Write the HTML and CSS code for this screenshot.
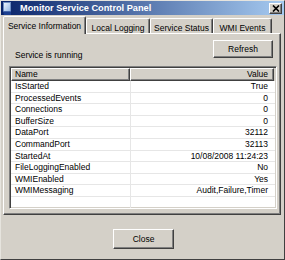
FILE: index.html
```html
<!DOCTYPE html>
<html lang="en">
<head>
  <meta charset="UTF-8">
  <title>Monitor Service Control Panel</title>
  <link rel="stylesheet" href="styles.css">
</head>
<body>
  <div class="window">
    <div class="titlebar">
      <svg class="app-icon" width="9" height="13" viewBox="0 0 9 13">
        <defs>
          <linearGradient id="scr" x1="0" y1="0" x2="1" y2="1">
            <stop offset="0" stop-color="#f4f8fd"/>
            <stop offset="1" stop-color="#8fb4e4"/>
          </linearGradient>
        </defs>
        <rect x="0.5" y="0.5" width="7" height="9" fill="url(#scr)" stroke="#6f8fc4"/>
        <path d="M0 9.5 L8 9.5 L8 13 L1 13 Z" fill="#1c3f8f"/>
      </svg>
      <span class="title">Monitor Service Control Panel</span>
      <span class="close-box">
        <svg width="8" height="7" viewBox="0 0 8 7"><path d="M1 0.5 L7 6.5 M7 0.5 L1 6.5" stroke="#000" stroke-width="1.7"/></svg>
      </span>
    </div>

    <div class="content">
      <div class="tabs">
        <div class="tab active tab-info">Service Information</div>
        <div class="tab tab-log">Local Logging</div>
        <div class="tab tab-status">Service Status</div>
        <div class="tab tab-wmi">WMI Events</div>
      </div>

      <div class="panel">
        <div class="panel-top">
          <span class="status">Service is running</span>
          <button class="btn btn-refresh">Refresh</button>
        </div>

        <div class="list">
          <div class="list-head">
            <div class="col-name">Name</div>
            <div class="col-value">Value</div>
          </div>
          <div class="row"><div class="col-name">IsStarted</div><div class="col-value">True</div></div>
          <div class="row"><div class="col-name">ProcessedEvents</div><div class="col-value">0</div></div>
          <div class="row"><div class="col-name">Connections</div><div class="col-value">0</div></div>
          <div class="row"><div class="col-name">BufferSize</div><div class="col-value">0</div></div>
          <div class="row"><div class="col-name">DataPort</div><div class="col-value">32112</div></div>
          <div class="row"><div class="col-name">CommandPort</div><div class="col-value">32113</div></div>
          <div class="row"><div class="col-name">StartedAt</div><div class="col-value">10/08/2008 11:24:23</div></div>
          <div class="row"><div class="col-name">FileLoggingEnabled</div><div class="col-value">No</div></div>
          <div class="row"><div class="col-name">WMIEnabled</div><div class="col-value">Yes</div></div>
          <div class="row"><div class="col-name">WMIMessaging</div><div class="col-value">Audit,Failure,Timer</div></div>
          <div class="row"><div class="col-name"></div><div class="col-value"></div></div>
        </div>
      </div>

      <div class="footer">
        <button class="btn btn-close">Close</button>
      </div>
    </div>
  </div>
</body>
</html>
```

FILE: styles.css
```css
* {
  box-sizing: border-box;
}
body {
  margin: 0;
  font-family: "Liberation Sans", Arial, sans-serif;
  font-size: 8.5px;
  color: #000;
  background: #d4d0c8;
}

/* window frame */
.window {
  width: 285px;
  height: 260px;
  background: #d4d0c8;
  border: 1px solid;
  border-color: #e6e4de #404040 #404040 #e6e4de;
}
.titlebar {
  display: flex;
  align-items: center;
  height: 14px;
  padding: 0 2px 0 2px;
  background: linear-gradient(to right, #0a246a, #a6caf0);
  color: #fff;
  font-weight: bold;
  font-size: 9.2px;
}
.app-icon {
  margin-right: 8px;
}
.close-box {
  display: flex;
  align-items: center;
  justify-content: center;
  margin-left: auto;
  width: 13px;
  height: 11px;
  background: #d4d0c8;
  border: 1px solid;
  border-color: #fff #404040 #404040 #fff;
  box-shadow: inset -1px -1px #808080;
}

.content {
  padding: 1px 3px 0 2px;
}

/* tabs */
.tabs {
  display: flex;
  align-items: flex-end;
  height: 17px;
}
.tab {
  height: 15px;
  padding-top: 4px;
  line-height: 10px;
  text-align: center;
  white-space: nowrap;
  border: 1px solid;
  border-bottom: none;
  border-color: #fff #404040 transparent #fff;
  border-radius: 2px 2px 0 0;
  box-shadow: inset -1px 0 #808080;
}
.tab.active {
  height: 18px;
  margin-bottom: -1px;
  background: #d4d0c8;
}
.tab-info { width: 83px; }
.tab-log { width: 64px; }
.tab-status { width: 63px; }
.tab-wmi { width: 59px; }

/* tab page */
.panel {
  display: flex;
  flex-direction: column;
  height: 182px;
  padding: 6px 3px 5px 5px;
  border: 1px solid;
  border-color: #fff #404040 #404040 #fff;
  box-shadow: inset -1px -1px #808080;
}
.panel-top {
  display: flex;
  justify-content: space-between;
  align-items: flex-start;
  height: 18px;
  margin-bottom: 8px;
}
.status {
  margin: 10px 0 0 6px;
  line-height: 10px;
}

.btn {
  padding: 0;
  font-family: inherit;
  font-size: 8.5px;
  color: #000;
  background: #d4d0c8;
  border: 1px solid;
  border-color: #fff #404040 #404040 #fff;
  box-shadow: inset -1px -1px #808080;
}
.btn-refresh {
  width: 60px;
  height: 18px;
  margin-right: 4px;
}

/* list view */
.list {
  flex: 1;
  overflow: hidden;
  padding: 1px;
  background: #fff;
  border: 1px solid;
  border-color: #808080 #fff #fff #808080;
  box-shadow: inset 1px 1px #404040, inset -1px -1px #d4d0c8;
}
.list-head {
  display: flex;
  height: 13px;
  background: #d4d0c8;
}
.list-head div {
  line-height: 11px;
  border: 1px solid;
  border-color: #fff #404040 #404040 #fff;
  box-shadow: inset -1px -1px #808080;
}
.col-name {
  width: 119px;
  padding-left: 4px;
  white-space: nowrap;
}
.list-head .col-name {
  padding-left: 3px;
}
.col-value {
  width: 144px;
  padding-right: 6px;
  text-align: right;
  white-space: nowrap;
}
.list-head .col-value {
  padding-right: 5px;
}
.row {
  display: flex;
  height: 11.6px;
  line-height: 10.6px;
  border-bottom: 1px solid #e6e6e6;
}
.row .col-value {
  border-left: 1px solid #e6e6e6;
}

/* bottom buttons */
.footer {
  display: flex;
  justify-content: center;
  padding-top: 14px;
}
.btn-close {
  width: 61px;
  height: 20px;
  margin-left: 3px;
}
```
